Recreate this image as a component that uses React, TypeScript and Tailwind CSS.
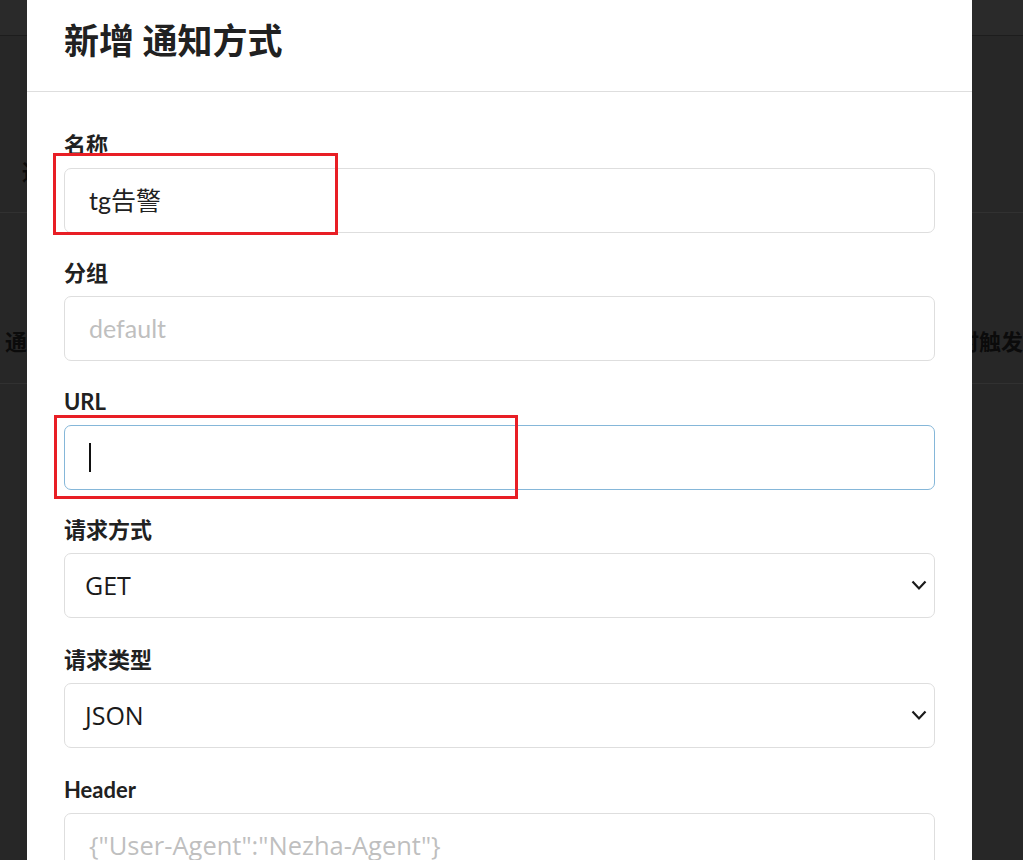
import React from "react";

function Label({ children }: { children: React.ReactNode }) {
  return (
    <div className="mb-[7px] text-[22px] leading-[32px] font-bold text-[#212121]">{children}</div>
  );
}

function Chevron() {
  return (
    <svg width="16" height="11" viewBox="0 0 16 11" className="shrink-0">
      <polyline points="1.5,1.5 8,8.5 14.5,1.5" fill="none" stroke="#1a1a1a" strokeWidth="2.2" />
    </svg>
  );
}

export default function App() {
  return (
    <div className="relative w-[1023px] h-[860px] overflow-hidden bg-[#272727] font-['Lato','Noto_Sans_CJK_SC',sans-serif]">
      {/* dimmed page behind */}
      <div className="flex flex-col">
        <div className="h-[36px] bg-[#2a2a2a] border-b border-[#1d1d1d]" />
        <div className="h-[177px] border-b border-[#313131] pl-[22px] pt-[120px] text-[22px] leading-[32px] font-bold text-[#0b0b0b]">
          通知
        </div>
        <div className="h-[171px] border-b border-[#313131] flex pt-[113px] text-[22px] leading-[32px] font-bold text-[#0b0b0b] whitespace-nowrap">
          <div className="w-[966px] pl-[5px]">通知方式</div>
          <div>时触发</div>
        </div>
      </div>

      {/* modal */}
      <div className="absolute inset-0 flex">
        <div className="ml-[27px] w-[945px] h-full bg-white flex flex-col">
          <div className="h-[92px] shrink-0 border-b border-[#dedede] pl-[37px] pt-[18px]">
            <div className="text-[35px] leading-[44px] font-bold text-[#212121]">新增 通知方式</div>
          </div>
          <div className="px-[37px] pt-[37px] flex flex-col">
            <div className="mb-[24px]">
              <Label>名称</Label>
              <div className="h-[65px] border border-[#dedede] rounded-[7px] px-[24px] flex items-center text-[25px] text-[#212121]">
                tg告警
              </div>
            </div>
            <div className="mb-[25px]">
              <Label>分组</Label>
              <div className="h-[65px] border border-[#dedede] rounded-[7px] px-[24px] flex items-center text-[25px] text-[#bfbfbf]">
                default
              </div>
            </div>
            <div className="mb-[24px]">
              <Label>URL</Label>
              <div className="h-[65px] border border-[#85b7d9] rounded-[7px] px-[24px] flex items-center">
                <span className="block w-[2px] h-[29px] bg-[#111]" />
              </div>
            </div>
            <div className="mb-[26px]">
              <Label>请求方式</Label>
              <div className="h-[65px] border border-[#dedede] rounded-[7px] pl-[20px] pr-[7px] flex items-center justify-between text-[25px] text-[#1a1a1a] font-['Open_Sans','Noto_Sans_CJK_SC',sans-serif]">
                <span>GET</span>
                <Chevron />
              </div>
            </div>
            <div className="mb-[26px]">
              <Label>请求类型</Label>
              <div className="h-[65px] border border-[#dedede] rounded-[7px] pl-[20px] pr-[7px] flex items-center justify-between text-[25px] text-[#1a1a1a] font-['Open_Sans','Noto_Sans_CJK_SC',sans-serif]">
                <span>JSON</span>
                <Chevron />
              </div>
            </div>
            <div>
              <Label>Header</Label>
              <div className="h-[120px] border border-[#dedede] rounded-[7px] px-[24px] pt-[16px] text-[25.5px] leading-[30px] text-[#bfbfbf] font-['Open_Sans','Noto_Sans_CJK_SC',sans-serif]">
                {'{"User-Agent":"Nezha-Agent"}'}
              </div>
            </div>
          </div>
        </div>
      </div>

      {/* red annotation boxes */}
      <div className="absolute left-[53px] top-[153px] w-[285px] h-[82px] border-[3px] border-[#e81e25]" />
      <div className="absolute left-[54px] top-[415px] w-[464px] h-[84px] border-[3px] border-[#e81e25]" />
    </div>
  );
}
